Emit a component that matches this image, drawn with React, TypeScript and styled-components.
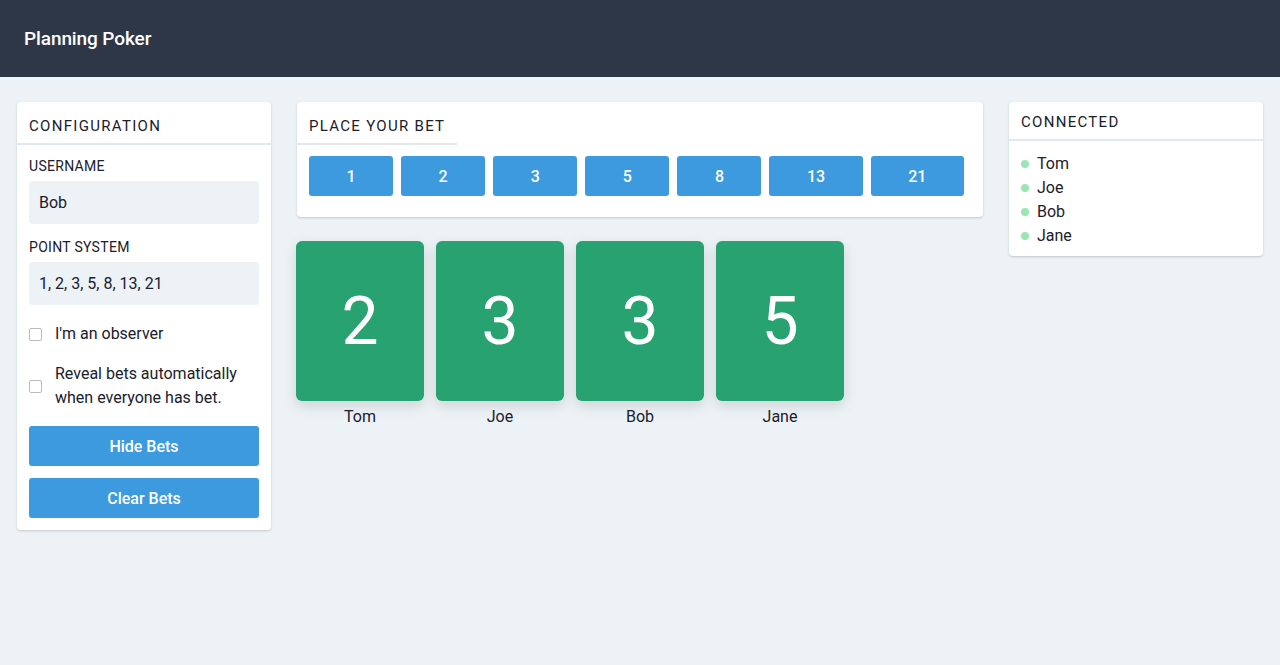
import React from "react";
import styled, { createGlobalStyle } from "styled-components";

const GlobalStyle = createGlobalStyle`
  html, body {
    margin: 0;
    padding: 0;
    background: #edf2f7;
    font-family: Roboto, "Liberation Sans", Arial, sans-serif;
    color: #1a202c;
  }
  * {
    box-sizing: border-box;
  }
`;

const Page = styled.div`
  min-height: 665px;
  background: #edf2f7;
`;

const TopBar = styled.header`
  height: 77px;
  background: #2d3748;
  display: flex;
  align-items: center;
  padding: 0 24px;
`;

const AppTitle = styled.h1`
  margin: 0;
  color: #ffffff;
  font-size: 19px;
  font-weight: 500;
  letter-spacing: -0.1px;
`;

const Main = styled.main`
  display: grid;
  grid-template-columns: 254px 1fr 254px;
  gap: 26px;
  align-items: start;
  padding: 25px 17px;
`;

const Panel = styled.section`
  background: #ffffff;
  border-radius: 4px;
  box-shadow: 0 1px 3px rgba(0, 0, 0, 0.12), 0 1px 2px rgba(0, 0, 0, 0.06);
`;

const PanelTitle = styled.div<{ $compact?: boolean; $inline?: boolean }>`
  display: ${({ $inline }) => ($inline ? "inline-block" : "block")};
  padding: ${({ $compact }) => ($compact ? "9px 12px 6px" : "13px 12px 6px")};
  font-size: 15px;
  line-height: 22px;
  letter-spacing: 1.3px;
  text-transform: uppercase;
  color: #1a202c;
  border-bottom: 2px solid #e2e8f0;
`;

const ConfigBody = styled.div`
  padding: 12px 12px 12px;
  display: flex;
  flex-direction: column;
`;

const FieldLabel = styled.label`
  font-size: 14px;
  line-height: 18px;
  text-transform: uppercase;
  letter-spacing: 0.3px;
  margin-bottom: 6px;
`;

const TextInput = styled.input`
  height: 43px;
  width: 100%;
  border: none;
  border-radius: 4px;
  background: #edf2f7;
  padding: 0 10px;
  font-family: inherit;
  font-size: 16px;
  color: #1a202c;
  margin-bottom: 14px;
  outline: none;
`;

const CheckRow = styled.label`
  display: flex;
  align-items: center;
  gap: 13px;
  font-size: 16px;
  line-height: 24px;
  margin: 3px 0 13px;
`;

const Box = styled.span`
  flex: none;
  width: 13px;
  height: 13px;
  border: 1px solid #b8bcc2;
  border-radius: 2px;
  background: #ffffff;
`;

const ActionButton = styled.button`
  height: 40px;
  width: 100%;
  margin-top: 3px;
  border: none;
  border-radius: 3px;
  background: #3d9ade;
  color: #ffffff;
  font-family: inherit;
  font-size: 16px;
  font-weight: 500;
  cursor: pointer;
  & + & {
    margin-top: 12px;
  }
`;

const Center = styled.div`
  display: flex;
  flex-direction: column;
  gap: 24px;
`;

const BetRow = styled.div`
  display: flex;
  gap: 8px;
  padding: 11px 12px 21px;
`;

const BetButton = styled.button`
  height: 40px;
  padding: 0 37.5px;
  border: none;
  border-radius: 3px;
  background: #3d9ade;
  color: #ffffff;
  font-family: inherit;
  font-size: 16px;
  font-weight: 500;
  cursor: pointer;
`;

const Table = styled.div`
  display: flex;
  gap: 12px;
  margin-left: -1px;
`;

const Seat = styled.div`
  display: flex;
  flex-direction: column;
  align-items: center;
  width: 128px;
`;

const Card = styled.div`
  width: 128px;
  height: 160px;
  border-radius: 6px;
  background: #27a270;
  color: #ffffff;
  display: flex;
  align-items: center;
  justify-content: center;
  font-size: 66px;
  box-shadow: 0 5px 14px rgba(0, 0, 0, 0.13);
`;

const SeatName = styled.div`
  margin-top: 7px;
  font-size: 16px;
  line-height: 18px;
`;

const UserList = styled.ul`
  list-style: none;
  margin: 0;
  padding: 11px 12px 8px;
`;

const UserItem = styled.li`
  display: flex;
  align-items: center;
  gap: 8px;
  font-size: 16px;
  line-height: 24px;
  &::before {
    content: "";
    width: 8px;
    height: 8px;
    border-radius: 50%;
    background: #9ae6b4;
  }
`;

const points = [1, 2, 3, 5, 8, 13, 21];
const bets = [
  { name: "Tom", value: 2 },
  { name: "Joe", value: 3 },
  { name: "Bob", value: 3 },
  { name: "Jane", value: 5 },
];

export default function App() {
  return (
    <Page>
      <GlobalStyle />
      <TopBar>
        <AppTitle>Planning Poker</AppTitle>
      </TopBar>
      <Main>
        <Panel>
          <PanelTitle>Configuration</PanelTitle>
          <ConfigBody>
            <FieldLabel>Username</FieldLabel>
            <TextInput defaultValue="Bob" />
            <FieldLabel>Point System</FieldLabel>
            <TextInput defaultValue="1, 2, 3, 5, 8, 13, 21" />
            <CheckRow>
              <Box />
              I'm an observer
            </CheckRow>
            <CheckRow>
              <Box />
              <span>
                Reveal bets automatically
                <br />
                when everyone has bet.
              </span>
            </CheckRow>
            <ActionButton>Hide Bets</ActionButton>
            <ActionButton>Clear Bets</ActionButton>
          </ConfigBody>
        </Panel>

        <Center>
          <Panel>
            <PanelTitle $inline>Place your bet</PanelTitle>
            <BetRow>
              {points.map((p) => (
                <BetButton key={p}>{p}</BetButton>
              ))}
            </BetRow>
          </Panel>
          <Table>
            {bets.map((b) => (
              <Seat key={b.name}>
                <Card>{b.value}</Card>
                <SeatName>{b.name}</SeatName>
              </Seat>
            ))}
          </Table>
        </Center>

        <Panel>
          <PanelTitle $compact>Connected</PanelTitle>
          <UserList>
            {bets.map((b) => (
              <UserItem key={b.name}>{b.name}</UserItem>
            ))}
          </UserList>
        </Panel>
      </Main>
    </Page>
  );
}
